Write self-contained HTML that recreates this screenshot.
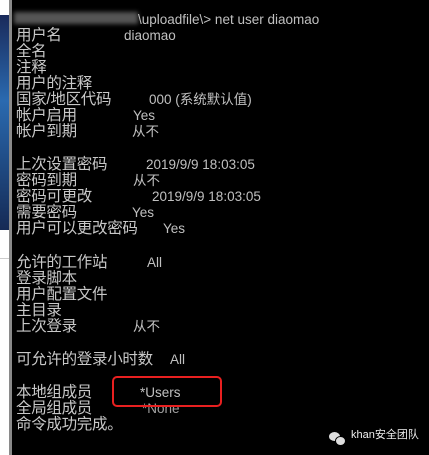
<html><head><style>
body{margin:0;width:429px;height:455px;overflow:hidden;background:#000;position:relative;font-family:"Liberation Sans","Noto Sans CJK SC",sans-serif;}
.l{position:absolute;left:16px;font-size:15.5px;color:#c8c8c8;line-height:16px;white-space:nowrap;letter-spacing:-0.3px}
.v{position:absolute;font-size:13.5px;color:#c0c0c0;line-height:16px;white-space:nowrap;}
</style></head><body>
<div style="position:absolute;left:0;top:0;width:9px;height:455px;background:#fff"></div>
<div style="position:absolute;left:0;top:15px;width:9px;height:215px;background:linear-gradient(#1a2a5a,#2a6ab0 40%,#152a55)"></div>
<div style="position:absolute;left:0;top:258px;width:9px;height:1px;background:#ccc"></div>
<div style="position:absolute;left:9px;top:0;width:3px;height:455px;background:#8a8a8a"></div>
<div style="position:absolute;left:14px;top:12px;width:124px;height:12px;background:#555;filter:blur(2px)"></div>
<div class="v" style="left:138px;top:12px">\uploadfile\&gt; net user diaomao</div>
<div class="l" style="top:28px">用户名</div><div class="v" style="left:124px;top:28px">diaomao</div>
<div class="l" style="top:44px">全名</div>
<div class="l" style="top:60px">注释</div>
<div class="l" style="top:76px">用户的注释</div>
<div class="l" style="top:92px">国家/地区代码</div><div class="v" style="left:149px;top:92px">000 (系统默认值)</div>
<div class="l" style="top:108px">帐户启用</div><div class="v" style="left:133px;top:108px">Yes</div>
<div class="l" style="top:124px">帐户到期</div><div class="v" style="left:132px;top:124px">从不</div>
<div class="l" style="top:157px">上次设置密码</div><div class="v" style="left:146px;top:157px">2019/9/9 18:03:05</div>
<div class="l" style="top:173px">密码到期</div><div class="v" style="left:133px;top:173px">从不</div>
<div class="l" style="top:189px">密码可更改</div><div class="v" style="left:152px;top:189px">2019/9/9 18:03:05</div>
<div class="l" style="top:205px">需要密码</div><div class="v" style="left:132px;top:205px">Yes</div>
<div class="l" style="top:221px">用户可以更改密码</div><div class="v" style="left:163px;top:221px">Yes</div>
<div class="l" style="top:255px">允许的工作站</div><div class="v" style="left:147px;top:255px">All</div>
<div class="l" style="top:271px">登录脚本</div>
<div class="l" style="top:287px">用户配置文件</div>
<div class="l" style="top:303px">主目录</div>
<div class="l" style="top:319px">上次登录</div><div class="v" style="left:133px;top:319px">从不</div>
<div class="l" style="top:352px">可允许的登录小时数</div><div class="v" style="left:170px;top:352px">All</div>
<div class="l" style="top:385px">本地组成员</div><div class="v" style="left:140px;top:385px">*Users</div>
<div class="l" style="top:401px">全局组成员</div><div class="v" style="left:142px;top:401px;color:#a0a0a0">*None</div>
<div class="l" style="top:417px">命令成功完成。</div>
<div style="position:absolute;left:112px;top:376px;width:106px;height:27px;border:2px solid #e82020;border-radius:5px"></div>
<div style="position:absolute;left:329px;top:432px;width:11px;height:9px;background:#ddd;border-radius:50%"></div>
<div style="position:absolute;left:335px;top:436px;width:9px;height:8px;background:#ddd;border-radius:50%;border:1px solid #000"></div>
<div style="position:absolute;left:351px;top:428px;font-size:11px;color:#eee;line-height:14px;white-space:nowrap">khan安全团队</div>
</body></html>
